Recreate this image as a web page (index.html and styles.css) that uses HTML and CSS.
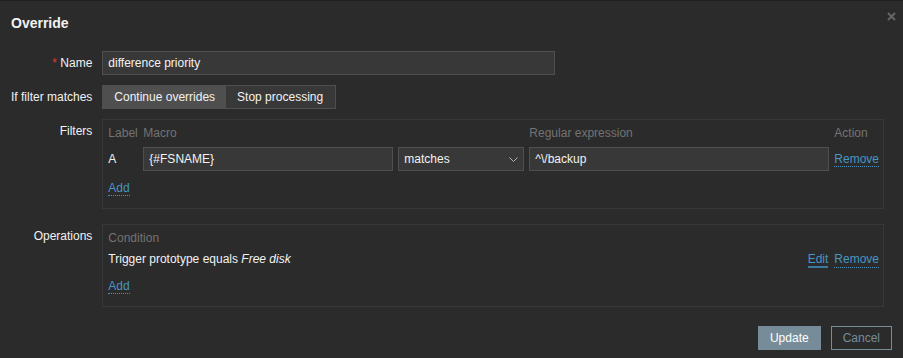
FILE: index.html
```html
<!DOCTYPE html>
<html lang="en">
  <head>
    <title>Override</title>
    <link rel="stylesheet" href="styles.css">
  </head>
  <body>
    <div class="dialog">
      <div class="dialog-head">
        <h4>Override</h4>
        <button type="button" class="btn-close" title="Close">
          <svg width="9" height="9" viewBox="0 0 9 9">
            <path d="M1 1 L8 8 M8 1 L1 8" stroke="#656565" stroke-width="2" fill="none"/>
          </svg>
        </button>
      </div>

      <form class="form-grid">
        <label class="form-label"><span class="req">*</span> Name</label>
        <div class="form-field">
          <input type="text" class="textbox name-box" value="difference priority">
        </div>

        <label class="form-label">If filter matches</label>
        <div class="form-field">
          <div class="radio-seg">
            <span class="seg seg-on">Continue overrides</span>
            <span class="seg">Stop processing</span>
          </div>
        </div>

        <label class="form-label label-top">Filters</label>
        <div class="form-field field-filters">
          <div class="table-box">
            <div class="filter-table">
              <span class="th">Label</span>
              <span class="th">Macro</span>
              <span class="th"></span>
              <span class="th">Regular expression</span>
              <span class="th">Action</span>

              <span class="td-label">A</span>
              <input type="text" class="textbox" value="{#FSNAME}">
              <div class="select">
                <span>matches</span>
                <svg width="9" height="5" viewBox="0 0 9 5">
                  <path d="M0.5 0.5 L4.5 4.5 L8.5 0.5" stroke="#b4b4b4" stroke-width="1" fill="none"/>
                </svg>
              </div>
              <input type="text" class="textbox" value="^\/backup">
              <a href="#" class="link-action">Remove</a>
            </div>
            <div class="add-row"><a href="#" class="link-action">Add</a></div>
          </div>
        </div>

        <label class="form-label label-top">Operations</label>
        <div class="form-field">
          <div class="table-box">
            <div class="ops-table">
              <span class="th">Condition</span>
              <span class="th"></span>

              <span>Trigger prototype equals <i>Free disk</i></span>
              <span class="actions">
                <a href="#" class="link-action link-edit">Edit</a>
                <a href="#" class="link-action">Remove</a>
              </span>
            </div>
            <div class="add-row add-ops"><a href="#" class="link-action">Add</a></div>
          </div>
        </div>
      </form>

      <div class="dialog-foot">
        <button type="button" class="btn btn-main">Update</button>
        <button type="button" class="btn btn-alt">Cancel</button>
      </div>
    </div>
  </body>
</html>
```

FILE: styles.css
```css
body {
  margin: 0;
  background-color: #2b2b2b;
  color: #f2f2f2;
  font-family: "Liberation Sans", Arial, sans-serif;
  font-size: 12px;
  line-height: 14px;
}

.dialog {
  height: 357px;
  border-top: 1px solid #202020;
  background-color: #2b2b2b;
}

.dialog-head {
  display: flex;
  justify-content: space-between;
  padding: 14px 7px 0 11px;
  height: 36px;
}

.dialog-head h4 {
  margin: 0;
  font-size: 14px;
  line-height: 16px;
  font-weight: bold;
}

.btn-close {
  background: none;
  border: none;
  padding: 0;
  margin-top: -6px;
  width: 9px;
  height: 9px;
  cursor: pointer;
}

.form-grid {
  display: grid;
  grid-template-columns: max-content 1fr;
  column-gap: 10px;
  row-gap: 10px;
  padding: 0 20px 0 11px;
  margin: 0;
}

.form-label {
  text-align: right;
  align-self: center;
}

.label-top {
  align-self: start;
  padding-top: 5px;
}

.req {
  color: #e33734;
}

.field-filters {
  margin-bottom: 5px;
}

.textbox {
  box-sizing: border-box;
  height: 24px;
  padding: 0 5px;
  border: 1px solid #4f4f4f;
  background-color: #383838;
  color: #f2f2f2;
  font-family: "Liberation Sans", Arial, sans-serif;
  font-size: 12px;
  outline: none;
}

.name-box {
  width: 453px;
}

.radio-seg {
  display: inline-flex;
  border: 1px solid #4f4f4f;
  background-color: #383838;
}

.seg {
  height: 22px;
  line-height: 22px;
  padding: 0 11px;
}

.seg + .seg {
  padding-right: 12px;
}

.seg-on {
  background-color: #4f4f4f;
}

.table-box {
  border: 1px solid #383838;
  padding: 6px 4px 13px 5px;
}

.th {
  color: #737373;
}

.filter-table {
  display: grid;
  grid-template-columns: 30px 250px 126px 300px auto;
  column-gap: 5px;
  row-gap: 7px;
  align-items: center;
}

.filter-table .textbox {
  width: 100%;
}

.select {
  box-sizing: border-box;
  height: 24px;
  display: flex;
  align-items: center;
  justify-content: space-between;
  padding: 0 5px 0 5px;
  border: 1px solid #4f4f4f;
  background-color: #383838;
}

.link-action {
  color: #4796c4;
  text-decoration: none;
  border-bottom: 1px dotted #4796c4;
}

.link-edit {
  border-bottom: 2px solid #3b7aa0;
}

.add-row {
  margin-top: 10px;
}

.ops-table {
  display: grid;
  grid-template-columns: 1fr auto;
  row-gap: 7px;
}

.actions {
  display: flex;
  gap: 6px;
}

.add-ops {
  margin-top: 11px;
}

.dialog-foot {
  display: flex;
  justify-content: flex-end;
  gap: 10px;
  padding: 19px 11px 0 0;
}

.btn {
  box-sizing: border-box;
  height: 24px;
  padding: 0 11px;
  border: 1px solid #768d99;
  font-family: "Liberation Sans", Arial, sans-serif;
  font-size: 12px;
  cursor: pointer;
}

.btn-main {
  background-color: #768d99;
  color: #ffffff;
}

.btn-alt {
  background-color: transparent;
  color: #768d99;
}
```
